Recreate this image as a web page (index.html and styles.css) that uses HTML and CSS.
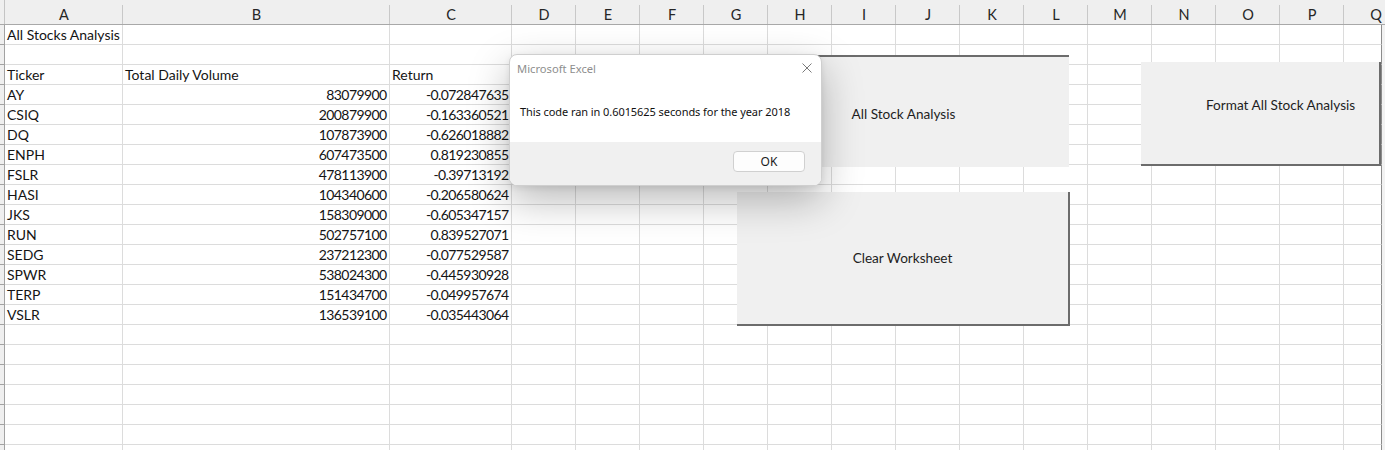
FILE: index.html
```html
<!DOCTYPE html>
<html>
<head>
<meta charset="utf-8">
<link rel="stylesheet" href="styles.css">
</head>
<body>
<div class="sheet">
  <div class="hdr">
    <div class="corner"></div>
    <div class="ch">A</div><div class="ch">B</div><div class="ch">C</div><div class="ch">D</div><div class="ch">E</div><div class="ch">F</div><div class="ch">G</div><div class="ch">H</div><div class="ch">I</div><div class="ch">J</div><div class="ch">K</div><div class="ch">L</div><div class="ch">M</div><div class="ch">N</div><div class="ch">O</div><div class="ch">P</div><div class="ch">Q</div>
  </div>
  <div class="row"><div class="rh"></div><div class="c">All Stocks Analysis</div><div class="c"></div><div class="c"></div><div class="fill"></div><div class="edge"></div></div>
  <div class="row"><div class="rh"></div><div class="c"></div><div class="c"></div><div class="c"></div><div class="fill"></div><div class="edge"></div></div>
  <div class="row"><div class="rh"></div><div class="c">Ticker</div><div class="c">Total Daily Volume</div><div class="c">Return</div><div class="fill"></div><div class="edge"></div></div>
  <div class="row"><div class="rh"></div><div class="c">AY</div><div class="c num">83079900</div><div class="c num">-0.072847635</div><div class="fill"></div><div class="edge"></div></div>
  <div class="row"><div class="rh"></div><div class="c">CSIQ</div><div class="c num">200879900</div><div class="c num">-0.163360521</div><div class="fill"></div><div class="edge"></div></div>
  <div class="row"><div class="rh"></div><div class="c">DQ</div><div class="c num">107873900</div><div class="c num">-0.626018882</div><div class="fill"></div><div class="edge"></div></div>
  <div class="row"><div class="rh"></div><div class="c">ENPH</div><div class="c num">607473500</div><div class="c num">0.819230855</div><div class="fill"></div><div class="edge"></div></div>
  <div class="row"><div class="rh"></div><div class="c">FSLR</div><div class="c num">478113900</div><div class="c num">-0.39713192</div><div class="fill"></div><div class="edge"></div></div>
  <div class="row"><div class="rh"></div><div class="c">HASI</div><div class="c num">104340600</div><div class="c num">-0.206580624</div><div class="fill"></div><div class="edge"></div></div>
  <div class="row"><div class="rh"></div><div class="c">JKS</div><div class="c num">158309000</div><div class="c num">-0.605347157</div><div class="fill"></div><div class="edge"></div></div>
  <div class="row"><div class="rh"></div><div class="c">RUN</div><div class="c num">502757100</div><div class="c num">0.839527071</div><div class="fill"></div><div class="edge"></div></div>
  <div class="row"><div class="rh"></div><div class="c">SEDG</div><div class="c num">237212300</div><div class="c num">-0.077529587</div><div class="fill"></div><div class="edge"></div></div>
  <div class="row"><div class="rh"></div><div class="c">SPWR</div><div class="c num">538024300</div><div class="c num">-0.445930928</div><div class="fill"></div><div class="edge"></div></div>
  <div class="row"><div class="rh"></div><div class="c">TERP</div><div class="c num">151434700</div><div class="c num">-0.049957674</div><div class="fill"></div><div class="edge"></div></div>
  <div class="row"><div class="rh"></div><div class="c">VSLR</div><div class="c num">136539100</div><div class="c num">-0.035443064</div><div class="fill"></div><div class="edge"></div></div>
  <div class="row"><div class="rh"></div><div class="c"></div><div class="c"></div><div class="c"></div><div class="fill"></div><div class="edge"></div></div>
  <div class="row"><div class="rh"></div><div class="c"></div><div class="c"></div><div class="c"></div><div class="fill"></div><div class="edge"></div></div>
  <div class="row"><div class="rh"></div><div class="c"></div><div class="c"></div><div class="c"></div><div class="fill"></div><div class="edge"></div></div>
  <div class="row"><div class="rh"></div><div class="c"></div><div class="c"></div><div class="c"></div><div class="fill"></div><div class="edge"></div></div>
  <div class="row"><div class="rh"></div><div class="c"></div><div class="c"></div><div class="c"></div><div class="fill"></div><div class="edge"></div></div>
  <div class="row"><div class="rh"></div><div class="c"></div><div class="c"></div><div class="c"></div><div class="fill"></div><div class="edge"></div></div>
  <div class="row"><div class="rh"></div><div class="c"></div><div class="c"></div><div class="c"></div><div class="fill"></div><div class="edge"></div></div>

  <div class="xbtn b-run">All Stock Analysis</div>
  <div class="xbtn b-clear">Clear Worksheet</div>
  <div class="xbtn b-format">Format All Stock Analysis</div>

  <div class="dlg">
    <div class="dlg-body">
      <div class="dlg-title">
        <span>Microsoft Excel</span>
        <svg class="close" width="10" height="10" viewBox="0 0 10 10"><path d="M0.5 0.5 L9.5 9.5 M9.5 0.5 L0.5 9.5" stroke="#7a7a7a" stroke-width="1" fill="none"/></svg>
      </div>
      <div class="dlg-msg">This code ran in 0.6015625 seconds for the year 2018</div>
    </div>
    <div class="dlg-foot">
      <div class="ok">OK</div>
    </div>
  </div>
</div>
</body>
</html>
```
FILE: styles.css
```css
* { box-sizing: border-box; margin: 0; padding: 0; }
body {
  margin: 0;
  width: 1385px;
  height: 450px;
  overflow: hidden;
  background: #fff;
  font-family: Lato, "Liberation Sans", sans-serif;
  color: #141414;
}
.sheet {
  position: relative;
  width: 1385px;
  height: 450px;
  overflow: hidden;
}
.hdr {
  display: grid;
  grid-template-columns: 5px 118px 267px 122px repeat(14, 64px);
  height: 25px;
  background: #efefef;
  border-bottom: 1px solid #a8a8a8;
}
.corner {
  border-right: 1px solid #c4c4c4;
}
.ch {
  display: flex;
  justify-content: center;
  align-items: center;
  padding-top: 5px;
  font-size: 14.5px;
  color: #262626;
  background: linear-gradient(#c8c8c8, #c8c8c8) no-repeat right bottom / 1px 19px;
}
.row {
  display: grid;
  grid-template-columns: 5px 118px 267px 122px 870px 1fr;
  height: 20px;
}
.rh {
  background: #efefef;
  border-right: 1px solid #a2a2a2;
  border-bottom: 1px solid #a2a2a2;
}
.c {
  border-right: 1px solid #dcdcdc;
  border-bottom: 1px solid #dcdcdc;
  padding: 1px 2px 0;
  font-size: 14px;
  line-height: 18px;
  white-space: nowrap;
}
.num {
  text-align: right;
  letter-spacing: -0.6px;
  padding-right: 2.5px;
}
.fill {
  border-right: 1px solid #8c8c8c;
  border-bottom: 1px solid #dcdcdc;
  background: repeating-linear-gradient(to right, transparent 0 63px, #dcdcdc 63px 64px);
}
.edge { background: #f2f2f2; }

.xbtn {
  position: absolute;
  display: flex;
  align-items: center;
  justify-content: center;
  background: #f0f0f0;
  font-size: 13.6px;
  color: #1e1e1e;
}
.b-run {
  left: 736px;
  top: 55px;
  width: 333px;
  height: 112px;
  border-top: 2px solid #6c6c6c;
  border-left: 2px solid #6c6c6c;
  padding-top: 3px;
}
.b-clear {
  left: 737px;
  top: 192px;
  width: 333px;
  height: 134px;
  border-right: 2px solid #6c6c6c;
  border-bottom: 2px solid #6c6c6c;
}
.b-format {
  left: 1141px;
  top: 62px;
  width: 240px;
  height: 104px;
  border-right: 2px solid #6c6c6c;
  border-bottom: 2px solid #6c6c6c;
  justify-content: flex-start;
  align-items: flex-start;
  padding: 34px 0 0 65px;
  line-height: 19px;
}

.dlg {
  position: absolute;
  left: 509px;
  top: 54px;
  width: 313px;
  height: 132px;
  border: 1px solid #cfcfcf;
  border-radius: 8px;
  background: #fff;
  box-shadow: 0 14px 40px rgba(0, 0, 0, 0.28), 0 2px 6px rgba(0, 0, 0, 0.08);
  overflow: hidden;
  display: flex;
  flex-direction: column;
  font-family: "Noto Sans", "Open Sans", sans-serif;
}
.dlg-body {
  flex: 1;
  padding: 6px 9px 0 7px;
}
.dlg-title {
  display: flex;
  justify-content: space-between;
  align-items: flex-start;
  font-size: 11.2px;
  line-height: 16px;
  color: #8e8e8e;
}
.close { margin-top: 2px; }
.dlg-msg {
  margin-top: 27px;
  padding-left: 3px;
  font-size: 11px;
  letter-spacing: -0.07px;
  line-height: 16px;
  color: #111;
  white-space: nowrap;
}
.dlg-foot {
  height: 43px;
  background: #f0f0f0;
  display: flex;
  justify-content: flex-end;
  align-items: flex-start;
  padding: 9px 16px 0 0;
}
.ok {
  width: 72px;
  height: 21px;
  border: 1px solid #d0d0d0;
  border-radius: 4px;
  background: #fdfdfd;
  font-size: 12px;
  line-height: 19px;
  text-align: center;
  color: #1a1a1a;
}
```
